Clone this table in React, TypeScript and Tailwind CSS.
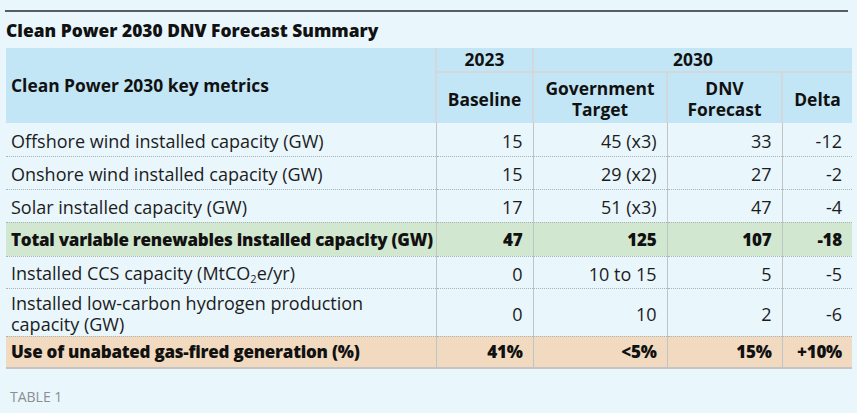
import React from "react";

type Row = {
  label: React.ReactNode;
  baseline: string;
  target: string;
  forecast: string;
  delta: string;
  kind?: "total" | "gas" | "tall";
};

const rows: Row[] = [
  { label: "Offshore wind installed capacity (GW)", baseline: "15", target: "45 (x3)", forecast: "33", delta: "-12" },
  { label: "Onshore wind installed capacity (GW)", baseline: "15", target: "29 (x2)", forecast: "27", delta: "-2" },
  { label: "Solar installed capacity (GW)", baseline: "17", target: "51 (x3)", forecast: "47", delta: "-4" },
  {
    label: "Total variable renewables installed capacity (GW)",
    baseline: "47",
    target: "125",
    forecast: "107",
    delta: "-18",
    kind: "total",
  },
  {
    label: (
      <>
        Installed CCS capacity (MtCO
        <span className="relative top-[3px] text-[11px]">2</span>e/yr)
      </>
    ),
    baseline: "0",
    target: "10 to 15",
    forecast: "5",
    delta: "-5",
  },
  {
    label: (
      <>
        Installed low-carbon hydrogen production
        <br />
        capacity (GW)
      </>
    ),
    baseline: "0",
    target: "10",
    forecast: "2",
    delta: "-6",
    kind: "tall",
  },
  {
    label: "Use of unabated gas-fired generation (%)",
    baseline: "41%",
    target: "<5%",
    forecast: "15%",
    delta: "+10%",
    kind: "gas",
  },
];

export default function App() {
  return (
    <div
      className="h-[413px] w-[857px] bg-[#e9f6fc] text-[#1c1c1c]"
      style={{ fontFamily: "'Open Sans', Lato, sans-serif" }}
    >
      <div className="pt-[10px] pl-[5px]">
        <div className="h-[2px] w-[843px] bg-[#5a5d60]" />
      </div>
      <h1 className="pl-[6px] pt-[7px] text-[17.4px] leading-[22px] font-extrabold text-[#111]">
        Clean Power 2030 DNV Forecast Summary
      </h1>

      <div className="pl-[6px] pt-[7px]">
        <table className="w-[846px] table-fixed border-collapse">
          <colgroup>
            <col className="w-[430px]" />
            <col className="w-[97px]" />
            <col className="w-[134px]" />
            <col className="w-[115px]" />
            <col className="w-[70px]" />
          </colgroup>
          <thead className="bg-[#c2e6f5] text-[17.4px] font-extrabold text-[#111]">
            <tr className="h-[24px]">
              <th
                rowSpan={2}
                className="pl-[5px] text-left align-middle leading-[21px]"
              >
                Clean Power 2030 key metrics
              </th>
              <th className="border-l-2 border-[#d2d8dc] text-center leading-[21px]">
                2023
              </th>
              <th
                colSpan={3}
                className="border-l-2 border-[#d2d8dc] text-center leading-[21px]"
              >
                2030
              </th>
            </tr>
            <tr className="h-[51px]">
              <th className="border-l-2 border-t-2 border-[#d2d8dc] pt-[2px] text-center leading-[21px]">
                Baseline
              </th>
              <th className="border-l-2 border-t-2 border-[#d2d8dc] pt-[2px] text-center leading-[21px]">
                Government
                <br />
                Target
              </th>
              <th className="border-l-2 border-t-2 border-[#d2d8dc] pt-[2px] text-center leading-[21px]">
                DNV
                <br />
                Forecast
              </th>
              <th className="border-l-2 border-t-2 border-[#d2d8dc] pt-[2px] text-center leading-[21px]">
                Delta
              </th>
            </tr>
          </thead>
          <tbody>
            {rows.map((r, i) => {
              const bold = r.kind === "total" || r.kind === "gas";
              const bg =
                r.kind === "total"
                  ? "bg-[#d2e7cf]"
                  : r.kind === "gas"
                    ? "bg-[#f1dabf]"
                    : "";
              const bottom =
                r.kind === "gas"
                  ? "border-b-2 border-solid border-[#c4c4c4]"
                  : "border-b border-dotted border-[#a9b3b8]";
              const height =
                r.kind === "tall"
                  ? "h-[48px]"
                  : i === 3
                    ? "h-[34px]"
                    : i === 4 || i === 6
                      ? "h-[32px]"
                      : "h-[33px]";
              const weight = bold
                ? "text-[17px] font-extrabold text-[#111] tracking-[-0.25px]"
                : "text-[18px] font-normal pt-[4px]";
              const cell = `border-l border-solid border-l-[#bfc4c7] pr-[10px] text-right leading-[21px] ${weight}`;
              return (
                <tr key={i} className={`${height} ${bg} ${bottom}`}>
                  <td className={`pl-[5px] leading-[21px] ${weight}`}>
                    {r.label}
                  </td>
                  <td className={cell}>{r.baseline}</td>
                  <td className={cell}>{r.target}</td>
                  <td className={cell}>{r.forecast}</td>
                  <td className={cell}>{r.delta}</td>
                </tr>
              );
            })}
          </tbody>
        </table>
      </div>

      <div className="pl-[10px] pt-[20px] text-[14px] leading-[16px] text-[#8a8f92]">
        TABLE 1
      </div>
    </div>
  );
}
